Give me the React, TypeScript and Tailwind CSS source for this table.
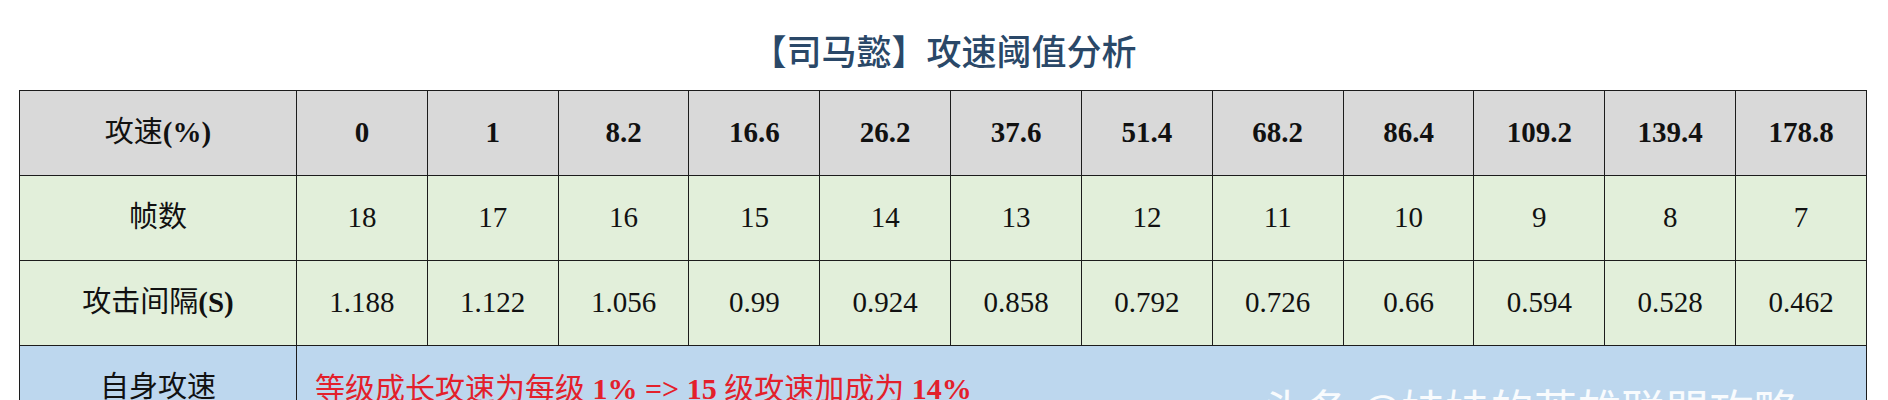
const speeds = ["0", "1", "8.2", "16.6", "26.2", "37.6", "51.4", "68.2", "86.4", "109.2", "139.4", "178.8"];
const frames = ["18", "17", "16", "15", "14", "13", "12", "11", "10", "9", "8", "7"];
const intervals = ["1.188", "1.122", "1.056", "0.99", "0.924", "0.858", "0.792", "0.726", "0.66", "0.594", "0.528", "0.462"];

const font = "font-['Liberation_Serif','Noto_Sans_CJK_SC',serif]";
const cell = "border-[1.5px] border-[#1c1c1c] h-[85px] p-0 text-center align-middle text-[29px] text-[#111]";

export default function App() {
  return (
    <div className={`relative w-[1888px] h-[400px] overflow-hidden bg-white ${font}`}>
      {/* 标题 */}
      <div className="h-[90px] pt-[10px] flex items-center justify-center">
        <h1 className="text-[35px] leading-[40px] font-medium text-[#2a4868] font-['Noto_Sans_CJK_SC',sans-serif]">
          【司马懿】攻速阈值分析
        </h1>
      </div>

      <table className="ml-[19px] w-[1848px] border-collapse table-fixed">
        <colgroup>
          <col className="w-[277px]" />
          {speeds.map((s) => (
            <col key={s} />
          ))}
        </colgroup>
        <tbody>
          <tr className="bg-[#d9d9d9]">
            <td className={cell}>
              攻速<b>(%)</b>
            </td>
            {speeds.map((s) => (
              <td key={s} className={`${cell} font-bold`}>
                {s}
              </td>
            ))}
          </tr>
          <tr className="bg-[#e2efda]">
            <td className={cell}>帧数</td>
            {frames.map((f) => (
              <td key={f} className={cell}>
                {f}
              </td>
            ))}
          </tr>
          <tr className="bg-[#e2efda]">
            <td className={cell}>
              攻击间隔<b>(S)</b>
            </td>
            {intervals.map((v) => (
              <td key={v} className={cell}>
                {v}
              </td>
            ))}
          </tr>
          <tr className="bg-[#bdd7ee]">
            <td className={cell}>自身攻速</td>
            <td colSpan={12} className={`${cell} text-left pl-[18px] text-[30px] text-[#e3202b]`}>
              等级成长攻速为每级 <b>1% =&gt; 15</b> 级攻速加成为 <b>14%</b>
            </td>
          </tr>
        </tbody>
      </table>

      {/* 水印 */}
      <div className="absolute left-[1262px] top-[386px] text-[44px] leading-none text-white/90 font-['Noto_Sans_CJK_SC',sans-serif] whitespace-nowrap">
        头条 @娃娃的英雄联盟攻略
      </div>
    </div>
  );
}
